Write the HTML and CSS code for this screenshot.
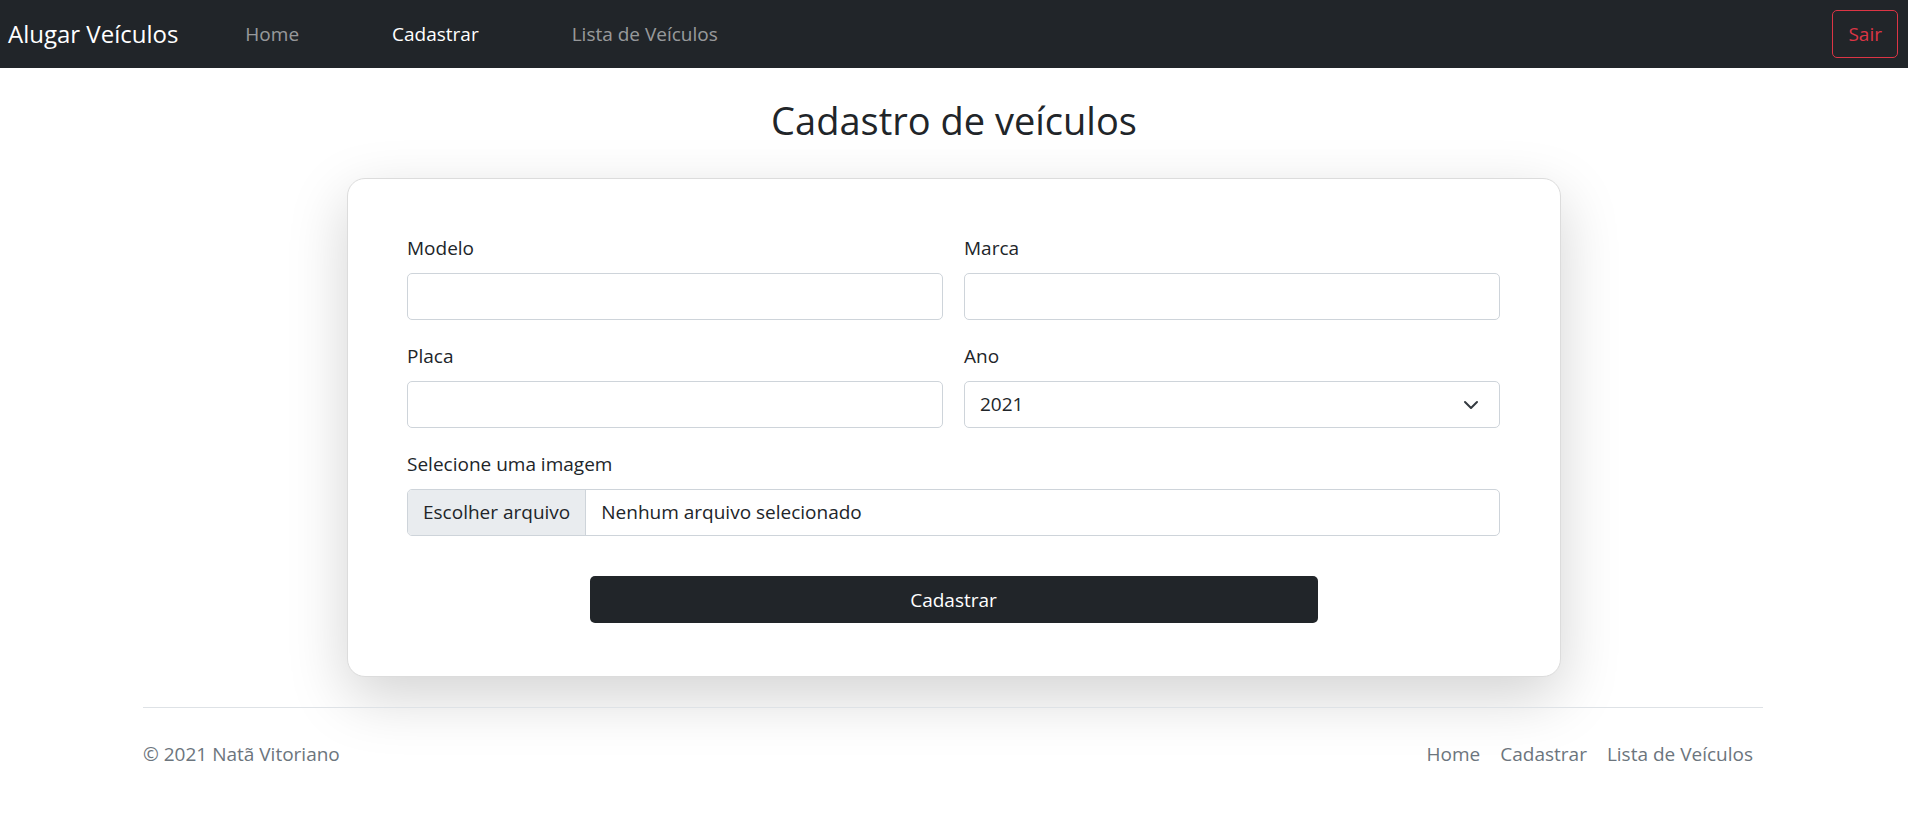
FILE: index.html
```html
<!DOCTYPE html>
<html lang="pt-BR">
<head>
<meta charset="utf-8">
<title>Cadastro de veículos</title>
<link rel="stylesheet" href="styles.css">
</head>
<body>
<div class="page">
  <nav class="navbar">
    <a class="brand" href="#">Alugar Veículos</a>
    <ul class="nav">
      <li><a class="nav-link" href="#">Home</a></li>
      <li><a class="nav-link active" href="#">Cadastrar</a></li>
      <li><a class="nav-link" href="#">Lista de Veículos</a></li>
    </ul>
    <button class="btn-sair" type="button">Sair</button>
  </nav>

  <main class="main">
    <h1 class="title">Cadastro de veículos</h1>
    <div class="card">
      <form class="form">
        <div class="grid">
          <div class="field">
            <label class="label">Modelo</label>
            <input class="input" type="text">
          </div>
          <div class="field">
            <label class="label">Marca</label>
            <input class="input" type="text">
          </div>
          <div class="field">
            <label class="label">Placa</label>
            <input class="input" type="text">
          </div>
          <div class="field">
            <label class="label">Ano</label>
            <div class="select">
              <span>2021</span>
              <svg class="chevron" viewBox="0 0 16 16" width="16" height="16"><path d="M2 5l6 6 6-6" fill="none" stroke="#343a40" stroke-width="2" stroke-linecap="round" stroke-linejoin="round"/></svg>
            </div>
          </div>
        </div>
        <div class="field field-last">
          <label class="label">Selecione uma imagem</label>
          <div class="file">
            <span class="file-btn">Escolher arquivo</span>
            <span class="file-name">Nenhum arquivo selecionado</span>
          </div>
        </div>
        <button class="btn-submit" type="button">Cadastrar</button>
      </form>
    </div>
  </main>

  <footer class="footer">
    <p class="copy">© 2021 Natã Vitoriano</p>
    <ul class="footer-nav">
      <li><a href="#">Home</a></li>
      <li><a href="#">Cadastrar</a></li>
      <li><a href="#">Lista de Veículos</a></li>
    </ul>
  </footer>
</div>
</body>
</html>
```

FILE: styles.css
```css
* { box-sizing: border-box; }

html, body {
  margin: 0;
  padding: 0;
  background: #fff;
}

body {
  font-family: "Open Sans", "Noto Sans", sans-serif;
  font-size: 19px;
  line-height: 1.5;
  color: #212529;
}

.page {
  width: 1908px;
  min-height: 839px;
}

a { text-decoration: none; }

/* Navbar */
.navbar {
  display: flex;
  align-items: center;
  height: 68px;
  padding: 0 10px 0 8px;
  background: #212529;
}

.brand {
  font-size: 24px;
  line-height: 1.5;
  color: #fff;
  margin-right: 20px;
}

.nav {
  display: flex;
  list-style: none;
  margin: 0;
  padding: 0;
}

.nav-link {
  display: block;
  padding: 0 46px 0 47px;
  font-size: 19px;
  color: rgba(255, 255, 255, 0.55);
}

.nav-link.active { color: #fff; }

.btn-sair {
  margin-left: auto;
  height: 48px;
  padding: 0 15px;
  font-family: inherit;
  font-size: 19px;
  color: #dc3545;
  background: transparent;
  border: 1px solid #dc3545;
  border-radius: 5px;
}

/* Main */
.main {
  padding-top: 28px;
}

.title {
  margin: 0 0 34px;
  text-align: center;
  font-size: 38px;
  font-weight: 400;
  line-height: 48px;
  color: #212529;
}

.card {
  width: 1214px;
  margin: 0 auto;
  padding: 54px 60px 53px 59px;
  background: #fff;
  border: 1px solid #dcdcdc;
  border-radius: 18px;
  box-shadow: 0 20px 60px rgba(0, 0, 0, 0.175);
}

.grid {
  display: grid;
  grid-template-columns: 1fr 1fr;
  column-gap: 21px;
}

.field { margin-bottom: 21px; }
.field-last { margin-bottom: 0; }

.label {
  display: block;
  margin-bottom: 10px;
  line-height: 30px;
  font-size: 19px;
  color: #212529;
}

.input,
.select {
  display: block;
  width: 100%;
  height: 47px;
  padding: 0 15px;
  font-family: inherit;
  font-size: 19px;
  color: #212529;
  background: #fff;
  border: 1px solid #ced4da;
  border-radius: 5px;
}

.select {
  display: flex;
  align-items: center;
  justify-content: space-between;
  padding-right: 20px;
}

.chevron {
  width: 16px;
  height: 16px;
}

.file {
  display: flex;
  height: 47px;
  border: 1px solid #ced4da;
  border-radius: 5px;
  overflow: hidden;
}

.file-btn {
  display: flex;
  align-items: center;
  padding: 0 15px;
  background: #e9ecef;
  border-right: 1px solid #ced4da;
}

.file-name {
  display: flex;
  align-items: center;
  padding-left: 15px;
}

.btn-submit {
  display: block;
  width: 728px;
  height: 47px;
  margin: 40px auto 0;
  font-family: inherit;
  font-size: 19px;
  color: #fff;
  background: #212529;
  border: none;
  border-radius: 5px;
}

/* Footer */
.footer {
  display: flex;
  justify-content: space-between;
  align-items: flex-start;
  width: 1620px;
  margin: 30px 0 0 143px;
  padding-top: 31px;
  border-top: 1px solid #dee2e6;
  color: #6c757d;
}

.copy {
  margin: 0;
  line-height: 30px;
}

.footer-nav {
  display: flex;
  list-style: none;
  margin: 0;
  padding: 0;
}

.footer-nav a {
  display: block;
  padding: 0 10px;
  line-height: 30px;
  color: #6c757d;
}
```
